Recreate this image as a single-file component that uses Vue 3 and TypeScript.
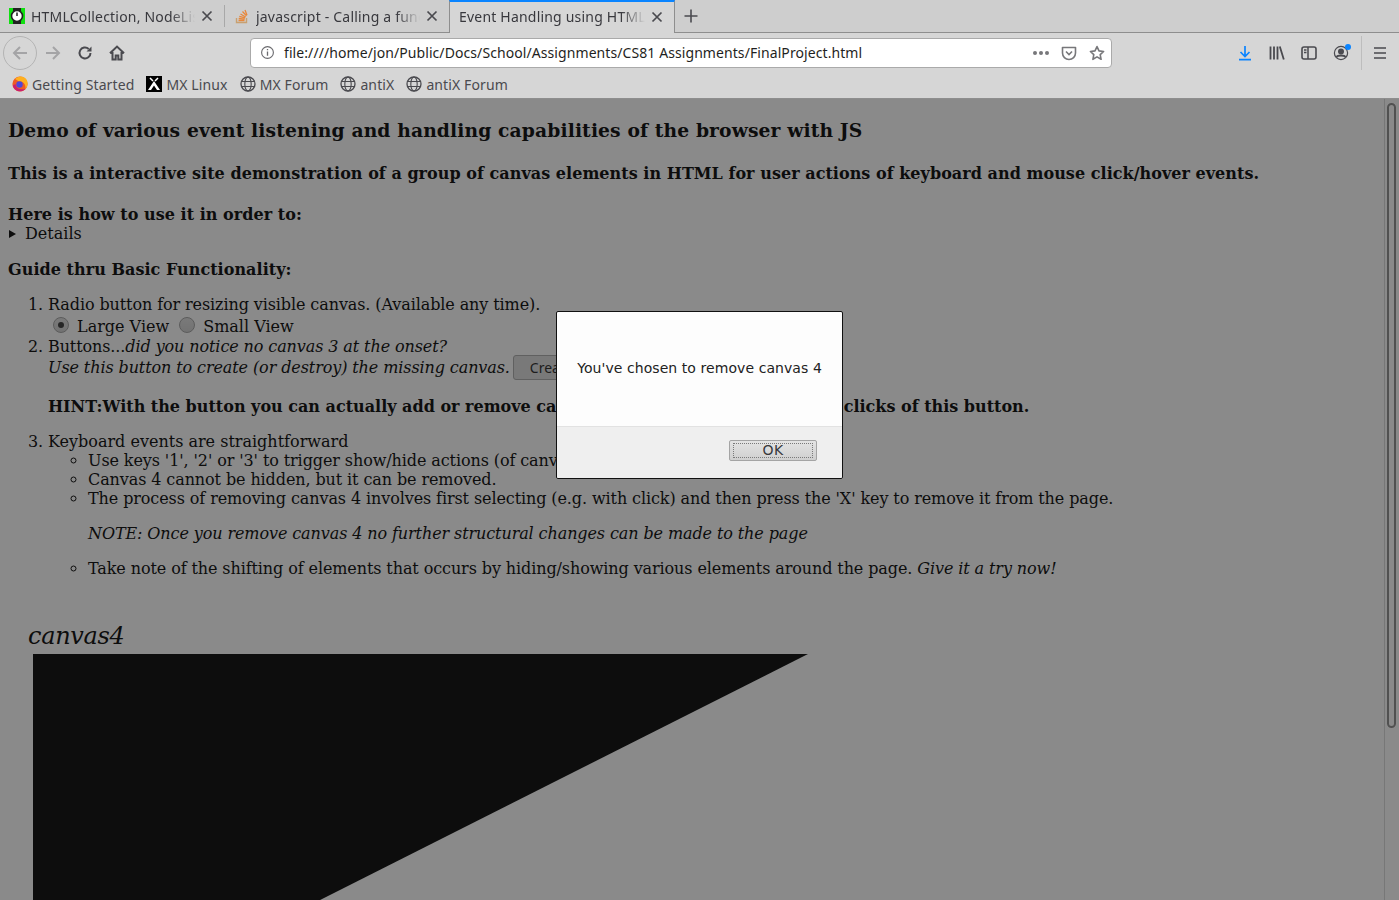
<template>
  <div class="browser">
    <header class="chrome">
      <div class="tabstrip">
        <div v-for="tab in tabs" :key="tab.title" class="tab" :class="{ active: tab.active }">
          <svg v-if="tab.icon === 'watch'" class="tab-icon" viewBox="0 0 16 16">
            <rect width="16" height="16" fill="#10e010" />
            <path d="M4 0h8v3.500H4zM4 12.500h8V16H4z" fill="#222" />
            <circle cx="8" cy="8" r="5.500" fill="#fff" stroke="#222" stroke-width="1.600" />
            <path d="M8 4.500v3.500" stroke="#222" stroke-width="1.500" />
          </svg>
          <svg v-else-if="tab.icon === 'stack'" class="tab-icon" viewBox="0 0 16 16" fill="none">
            <path d="M2.500 10v4.500h10V10" stroke="#c8a070" stroke-width="1.400" />
            <path d="M4.500 12.500h6M4.700 10.500l6 .6M5.300 8.300l5.800 1.600M6.500 6l5.200 3M8.500 3.500l4 4.400M11 2l2 5.200" stroke="#e8873a" stroke-width="1.300" />
          </svg>
          <span class="tab-title">{{ tab.title }}</span>
          <svg class="tab-close" viewBox="0 0 12 12"><path d="M1.500 1.500l9 9M10.500 1.500l-9 9" stroke="#4a4a4f" stroke-width="1.700" fill="none" /></svg>
        </div>
        <svg class="new-tab" viewBox="0 0 16 16"><path d="M8 1.500v13M1.500 8h13" stroke="#4a4a4f" stroke-width="1.600" fill="none" /></svg>
      </div>

      <div class="navbar">
        <div class="back-btn">
          <svg viewBox="0 0 18 18" fill="none"><path d="M16 9H3M9 3L3 9l6 6" stroke="#a4a4a6" stroke-width="2" /></svg>
        </div>
        <svg class="nav-icon" viewBox="0 0 18 18" fill="none"><path d="M2 9h13M9 3l6 6-6 6" stroke="#a4a4a6" stroke-width="2" /></svg>
        <svg class="nav-icon reload" viewBox="0 0 16 16" fill="none"><path d="M13.500 8a5.500 5.500 0 1 1-1.800-4.100" stroke="#4a4a4f" stroke-width="2" /><path d="M14.500 1.500v5h-5z" fill="#4a4a4f" /></svg>
        <svg class="nav-icon home" viewBox="0 0 16 16" fill="none"><path d="M1 8.300L8 1.600l7 6.700M3.500 7v7.500h3.200v-4h2.600v4h3.200V7" stroke="#4a4a4f" stroke-width="2" /></svg>

        <div class="urlbar">
          <svg class="info" viewBox="0 0 16 16" fill="none"><circle cx="8" cy="8" r="6.300" stroke="#6a6a6e" stroke-width="1.200" /><path d="M8 7v4.500M8 4.200v1.500" stroke="#6a6a6e" stroke-width="1.400" /></svg>
          <span class="url">file:////home/jon/Public/Docs/School/Assignments/CS81 Assignments/FinalProject.html</span>
          <span class="dots"><i /><i /><i /></span>
          <svg class="pocket" viewBox="0 0 16 16" fill="none"><path d="M1.500 2.500h13v5.500a6.500 6.500 0 0 1-13 0z" stroke="#77777a" stroke-width="1.600" stroke-linejoin="round" /><path d="M5 6.500l3 3 3-3" stroke="#77777a" stroke-width="1.600" /></svg>
          <svg class="star" viewBox="0 0 16 16" fill="none"><path d="M8 1.600l2 4.300 4.600.6-3.400 3.200.9 4.600L8 11.900l-4.100 2.400.9-4.600L1.400 6.500 6 5.900z" stroke="#77777a" stroke-width="1.600" stroke-linejoin="round" /></svg>
        </div>

        <div class="tools">
          <svg class="download" viewBox="0 0 16 16" fill="none"><path d="M8 1v10M3.500 7L8 11.500 12.500 7M2 14.700h12" stroke="#0a84ff" stroke-width="1.700" /></svg>
          <svg class="library" viewBox="0 0 16 16" fill="none"><path d="M1.500 1.500v13M5 1.500v13M8.500 1.500v13M10.800 1.500l4 13" stroke="#4a4a4f" stroke-width="1.800" /></svg>
          <svg class="sidebar" viewBox="0 0 16 16" fill="none"><rect x="1" y="2" width="14" height="12" rx="2" stroke="#4a4a4f" stroke-width="1.600" /><path d="M7 2v12M3 5h2.500M3 7.500h2.500" stroke="#4a4a4f" stroke-width="1.500" /></svg>
          <span class="account">
            <svg viewBox="0 0 16 16" fill="none"><circle cx="8" cy="8" r="6.600" stroke="#4a4a4f" stroke-width="1.200" /><circle cx="8" cy="6.500" r="3" fill="#4a4a4f" /><path d="M3.500 12c1-2 8-2 9 0" stroke="#4a4a4f" stroke-width="2" /></svg>
            <i class="badge" />
          </span>
          <span class="divider" />
          <svg class="menu" viewBox="0 0 16 16" fill="none"><path d="M2 3h12M2 8h12M2 13h12" stroke="#4a4a4f" stroke-width="1.700" /></svg>
        </div>
      </div>

      <div class="bookmarks">
        <div v-for="mark in bookmarks" :key="mark.label" class="bookmark">
          <svg v-if="mark.icon === 'firefox'" viewBox="0 0 16 16">
            <circle cx="8" cy="8" r="7.600" fill="#ef5a24" />
            <path d="M3 3C6 -.5 12 -.5 14.500 3.500 16.500 7 15.500 11 13.500 13 14 8 11 5 7 5.500z" fill="#ffb01f" />
            <path d="M.8 9.500C2 15 9 17.500 13.500 13 9 14 4 13 3.500 8z" fill="#c9206f" />
            <circle cx="7.500" cy="8.500" r="3.200" fill="#4f46d8" />
          </svg>
          <svg v-else-if="mark.icon === 'mx'" viewBox="0 0 16 16">
            <rect width="16" height="16" fill="#000" />
            <path d="M2 14L8 5l6 9h-3L8 9.500 5 14z" fill="#fff" />
            <path d="M4 2l3 3M12 2L9 5" stroke="#fff" stroke-width="1.500" />
          </svg>
          <svg v-else viewBox="0 0 16 16" fill="none" stroke="#4a4a4f" stroke-width="1.100">
            <circle cx="8" cy="8" r="7" stroke-width="1.300" />
            <ellipse cx="8" cy="8" rx="3.200" ry="7" />
            <path d="M1.500 5.500h13M1.500 10.500h13" />
          </svg>
          <span>{{ mark.label }}</span>
        </div>
      </div>
    </header>

    <main class="viewport">
      <div class="page">
        <h3>Demo of various event listening and handling capabilities of the browser with JS</h3>
        <h4>This is a interactive site demonstration of a group of canvas elements in HTML for user actions of keyboard and mouse click/hover events.</h4>
        <h4 class="howto">Here is how to use it in order to:</h4>
        <div class="details"><i class="caret" />Details</div>
        <h4 class="guide">Guide thru Basic Functionality:</h4>
        <ol>
          <li>
            Radio button for resizing visible canvas. (Available any time).
            <div class="radios">
              <span class="radio checked" /><span class="radio-label">Large View</span>
              <span class="radio" /><span>Small View</span>
            </div>
          </li>
          <li>
            Buttons...<em>did you notice no canvas 3 at the onset?</em>
            <div class="use-line">
              <em>Use this button to create (or destroy) the missing canvas.</em>
              <span class="page-btn">Create/Destroy</span>
            </div>
            <p class="hint"><strong>HINT:With the button you can actually add or remove canvas 3 with several consecutive clicks of this button.</strong></p>
          </li>
          <li>
            <span class="plain">Keyboard events are straightforward</span>
            <ul>
              <li>Use keys '1', '2' or '3' to trigger show/hide actions (of canvases 1-3)</li>
              <li>Canvas 4 cannot be hidden, but it can be removed.</li>
              <li>
                The process of removing canvas 4 involves first selecting (e.g. with click) and then press the 'X' key to remove it from the page.
                <p class="note"><em>NOTE: Once you remove canvas 4 no further structural changes can be made to the page</em></p>
              </li>
              <li>Take note of the shifting of elements that occurs by hiding/showing various elements around the page. <em>Give it a try now!</em></li>
            </ul>
          </li>
        </ol>
        <section class="canvas-block">
          <h2>canvas4</h2>
          <svg class="canvas" viewBox="0 0 775 300"><path d="M0 0H775L180 300H0z" fill="#000" /></svg>
        </section>
      </div>
      <div class="scrollbar"><div class="thumb" /></div>
      <div class="shade" />
      <div class="dialog">
        <div class="dialog-body">You've chosen to remove canvas 4</div>
        <div class="dialog-foot">
          <div class="ok-btn"><span>OK</span></div>
        </div>
      </div>
    </main>
  </div>
</template>

<script setup lang="ts">
interface Tab {
  title: string
  icon?: 'watch' | 'stack'
  active?: boolean
}

interface Bookmark {
  label: string
  icon: 'firefox' | 'mx' | 'globe'
}

const tabs: Tab[] = [
  { title: 'HTMLCollection, NodeList', icon: 'watch' },
  { title: 'javascript - Calling a function', icon: 'stack' },
  { title: 'Event Handling using HTML', active: true }
]

const bookmarks: Bookmark[] = [
  { label: 'Getting Started', icon: 'firefox' },
  { label: 'MX Linux', icon: 'mx' },
  { label: 'MX Forum', icon: 'globe' },
  { label: 'antiX', icon: 'globe' },
  { label: 'antiX Forum', icon: 'globe' }
]
</script>

<style>
html,
body {
  margin: 0;
  overflow: hidden;
}
</style>

<style scoped>
.browser {
  width: 1399px;
  height: 900px;
  display: flex;
  flex-direction: column;
  overflow: hidden;
}

.chrome {
  flex: none;
  font-family: "Noto Sans", sans-serif;
  font-size: 14px;
  color: #38383d;
  background: #d6d6d6;
  border-bottom: 1px solid #8e8e8e;
}

.tabstrip {
  height: 33px;
  display: flex;
  align-items: stretch;
  background: #cecece;
  border-bottom: 1px solid #8e8e8e;
  box-sizing: border-box;
}

.tab {
  position: relative;
  width: 225px;
  box-sizing: border-box;
  display: flex;
  align-items: center;
  padding: 0 12px 0 9px;
}

.tab + .tab::before {
  content: "";
  position: absolute;
  left: -1px;
  top: 5px;
  bottom: 5px;
  width: 1px;
  background: #a8a8a8;
}

.tab.active {
  background: #d6d6d6;
  height: 33px;
  width: 226px;
  margin-left: -1px;
  border-top: 2px solid #0a84ff;
  border-left: 1px solid #8e8e8e;
  border-right: 1px solid #8e8e8e;
  padding: 0 11px 2px 9px;
}

.tab.active::before {
  display: none;
}

.tab-icon {
  width: 16px;
  height: 16px;
  flex: none;
  margin-right: 6px;
}

.tab-title {
  flex: 1;
  min-width: 0;
  overflow: hidden;
  white-space: nowrap;
  letter-spacing: 0.2px;
  -webkit-mask-image: linear-gradient(to right, #000 calc(100% - 24px), transparent);
  mask-image: linear-gradient(to right, #000 calc(100% - 24px), transparent);
}

.tab-close {
  width: 12px;
  height: 12px;
  flex: none;
  margin-left: 6px;
}

.new-tab {
  width: 16px;
  height: 16px;
  align-self: center;
  margin-left: 8px;
}

.navbar {
  height: 37px;
  box-sizing: border-box;
  padding: 2px 0 0 3px;
  display: flex;
  align-items: center;
}

.back-btn {
  width: 34px;
  height: 34px;
  box-sizing: border-box;
  display: flex;
  align-items: center;
  justify-content: center;
  border: 1px solid #b4b4b4;
  border-radius: 50%;
}

.back-btn svg {
  width: 18px;
  height: 18px;
}

.nav-icon {
  width: 18px;
  height: 18px;
  margin-left: 7px;
}

.nav-icon.reload {
  width: 16px;
  height: 16px;
  margin-left: 15px;
}

.nav-icon.home {
  width: 16px;
  height: 16px;
  margin-left: 16px;
}

.urlbar {
  width: 862px;
  height: 30px;
  box-sizing: border-box;
  margin-left: 125px;
  display: flex;
  align-items: center;
  background: #fff;
  border: 1px solid #aaa;
  border-radius: 4px;
  padding: 0 6px 0 9px;
}

.info {
  width: 15px;
  height: 15px;
  flex: none;
}

.url {
  margin-left: 9px;
  flex: 1;
  white-space: nowrap;
  letter-spacing: 0.08px;
  color: #1f1f22;
}

.dots {
  display: flex;
  gap: 2px;
  margin-right: 12px;
}

.dots i {
  width: 4px;
  height: 4px;
  border-radius: 50%;
  background: #77777a;
}

.pocket,
.star {
  width: 16px;
  height: 16px;
}

.star {
  margin-left: 12px;
}

.tools {
  flex: 1;
  display: flex;
  align-items: center;
  padding-left: 125px;
}

.tools svg {
  width: 16px;
  height: 16px;
  flex: none;
}

.library,
.sidebar {
  margin-left: 16px;
}

.account {
  position: relative;
  display: flex;
  margin-left: 16px;
}

.badge {
  position: absolute;
  top: -1px;
  right: -2px;
  width: 6px;
  height: 6px;
  border-radius: 50%;
  background: #0a84ff;
}

.divider {
  width: 1px;
  height: 34px;
  margin-left: 12px;
  background: #bdbdbd;
}

.tools .menu {
  margin-left: 10px;
}

.bookmarks {
  height: 28px;
  display: flex;
  align-items: center;
  padding-left: 12px;
  gap: 12px;
  letter-spacing: 0.12px;
  color: #4a4a4f;
}

.bookmark {
  display: flex;
  align-items: center;
  gap: 4px;
}

.bookmark svg {
  width: 16px;
  height: 16px;
}

.viewport {
  position: relative;
  flex: 1;
  min-height: 0;
  overflow: hidden;
  display: flex;
  background: #fff;
}

.page {
  flex: 1;
  min-width: 0;
  padding: 8px;
  font-family: "DejaVu Serif", serif;
  font-size: 16px;
  color: #000;
}

h3 {
  font-size: 18.72px;
  letter-spacing: 0.12px;
  margin: 12px 0 23px;
}

h4 {
  font-size: 16px;
  letter-spacing: 0.04px;
  margin: 0 0 22px;
}

.howto {
  margin: 0;
}

.details {
  display: flex;
  align-items: center;
}

.caret {
  width: 0;
  height: 0;
  margin: 0 9px 0 1px;
  border-left: 7px solid #000;
  border-top: 4px solid transparent;
  border-bottom: 4px solid transparent;
}

.guide {
  margin: 17px 0 16px;
}

ol {
  margin: 0;
  padding-left: 40px;
  letter-spacing: -0.1px;
}

ul {
  margin: 0;
  padding-left: 40px;
  list-style: circle;
}

.plain {
  letter-spacing: 0;
}

.radios {
  display: flex;
  align-items: center;
  height: 21px;
  margin-top: 2px;
  padding-left: 5px;
  letter-spacing: 0;
}

.radio {
  width: 16px;
  height: 16px;
  box-sizing: border-box;
  margin: -3px 8px 0 0;
  border: 1px solid #a0a0a0;
  border-radius: 50%;
  background: linear-gradient(#dedede, #cfcfcf);
  display: flex;
  align-items: center;
  justify-content: center;
}

.radio.checked::after {
  content: "";
  width: 6px;
  height: 6px;
  border-radius: 50%;
  background: #333;
}

.radio-label {
  margin-right: 10px;
}

.use-line {
  display: flex;
  align-items: center;
  gap: 3px;
  height: 22px;
}

.page-btn {
  padding: 2px 16px;
  font-family: "Noto Sans", sans-serif;
  font-size: 14px;
  letter-spacing: 0;
  white-space: nowrap;
  border: 1px solid #a9a9a9;
  border-radius: 3px;
  background: #dcdcdc;
  color: #222;
}

.hint {
  margin: 19px 0 16px;
  letter-spacing: 0;
}

.note {
  margin: 16px 0;
}

.canvas-block {
  margin-top: 42px;
  padding-left: 20px;
}

h2 {
  margin: 0 0 2px;
  font-size: 24px;
  font-weight: normal;
  font-style: italic;
  letter-spacing: -0.3px;
  line-height: 32px;
}

.canvas {
  display: block;
  width: 775px;
  height: 300px;
  margin-left: 5px;
}

.scrollbar {
  flex: none;
  width: 15px;
  box-sizing: border-box;
  padding: 4px 3px 0 2px;
  background: #fff;
  border-left: 1px solid #d8d8d8;
}

.thumb {
  height: 625px;
  box-sizing: border-box;
  border: 2px solid #8c8c8c;
  border-radius: 5px;
}

.shade {
  position: absolute;
  inset: 0;
  background: rgba(25, 25, 25, 0.51);
}

.dialog {
  position: absolute;
  left: 556px;
  top: 212px;
  width: 287px;
  height: 168px;
  box-sizing: border-box;
  display: flex;
  flex-direction: column;
  background: #fdfdfd;
  border: 1px solid #111;
  border-radius: 2px;
  font-family: "DejaVu Sans", sans-serif;
  font-size: 14px;
  color: #222;
}

.dialog-body {
  height: 115px;
  box-sizing: border-box;
  padding-bottom: 3px;
  display: flex;
  align-items: center;
  justify-content: center;
  border-bottom: 1px solid #e2e2e2;
  letter-spacing: 0.07px;
}

.dialog-foot {
  flex: 1;
  display: flex;
  align-items: center;
  justify-content: flex-end;
  padding: 0 25px 5px 0;
  background: #efefef;
  border-radius: 0 0 2px 2px;
}

.ok-btn {
  width: 88px;
  height: 21px;
  box-sizing: border-box;
  padding: 2px 3px;
  background: linear-gradient(#e4e4e4, #cfcfcf);
  border: 1px solid #a4a4a4;
  border-radius: 2px;
}

.ok-btn span {
  height: 100%;
  box-sizing: border-box;
  display: flex;
  align-items: center;
  justify-content: center;
  letter-spacing: 0.5px;
  color: #38383d;
  border: 1px dotted #7a7a7a;
}
</style>
